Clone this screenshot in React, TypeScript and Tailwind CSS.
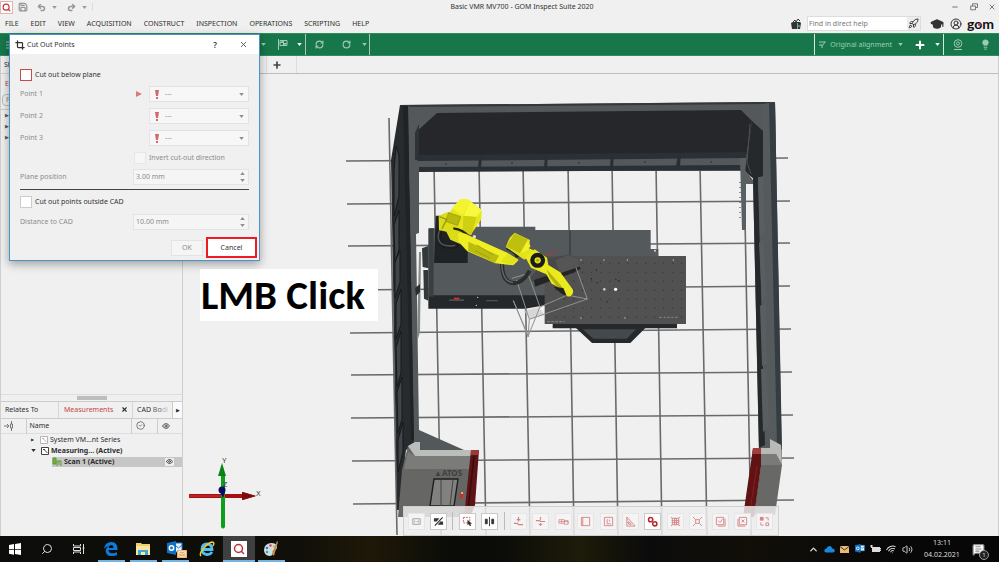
import type { ReactNode } from "react";
import {
  Check,
  ChevronUp,
  CircleCheck,
  CircleUserRound,
  Crop,
  Eye,
  GraduationCap,
  Lightbulb,
  Mail,
  Minus,
  MessageSquareText,
  Plus,
  Redo2,
  RefreshCw,
  Rocket,
  RotateCw,
  Save,
  Search,
  Undo2,
  Volume2,
  Wifi,
  X,
} from "lucide-react";

const menus = [
  "FILE",
  "EDIT",
  "VIEW",
  "ACQUISITION",
  "CONSTRUCT",
  "INSPECTION",
  "OPERATIONS",
  "SCRIPTING",
  "HELP",
];

function Caret({ className = "" }: { className?: string }) {
  return (
    <svg viewBox="0 0 6 4" className={`h-[3px] w-[5px] shrink-0 fill-current ${className}`}>
      <path d="M0 0h6L3 4z" />
    </svg>
  );
}

function TitleBar() {
  return (
    <div className="flex h-[14px] items-center text-[#989898]">
      <div className="flex w-[93px] shrink-0 items-center">
        <span className="flex size-[13px] items-center justify-center border border-[#e2b3b5] bg-white text-[#c4363b]">
          <Search className="size-[9px]" strokeWidth={3} />
        </span>
        <button aria-label="Save" className="ml-[5px]">
          <Save className="size-[10px]" strokeWidth={3} />
        </button>
        <button aria-label="Undo" className="ml-[9px]">
          <Undo2 className="size-[9px]" strokeWidth={4} />
        </button>
        <Caret className="ml-[6px]" />
        <button aria-label="Redo" className="ml-[10px]">
          <Redo2 className="size-[9px]" strokeWidth={4} />
        </button>
        <Caret className="ml-[6px]" />
        <span className="ml-auto h-2 w-px bg-[#dcdcdc]" />
      </div>
      <h1 className="flex-1 text-center text-[#333]">Basic VMR MV700 - GOM Inspect Suite 2020</h1>
      <div className="flex w-[48px] shrink-0 items-center justify-between pr-[3px] text-[#777]">
        <button aria-label="Minimize">
          <Minus className="size-2" strokeWidth={3} />
        </button>
        <button aria-label="Restore">
          <svg viewBox="0 0 8 8" className="size-2 fill-none stroke-current">
            <path d="M2.500 3V.8h5v3.700H5.500M.7 3h4.800v3.800H.7z" />
          </svg>
        </button>
        <button aria-label="Close">
          <X className="size-2" strokeWidth={3} />
        </button>
      </div>
    </div>
  );
}

function MenuBar() {
  return (
    <div className="flex h-[19px] items-center justify-between pl-[5px] pr-[3px]">
      <nav className="flex gap-3">
        {menus.map((m) => (
          <button key={m}>{m}</button>
        ))}
      </nav>
      <div className="flex items-center text-[#333]">
        <svg viewBox="0 0 10 10" className="size-[10px]">
          <path d="M0 4l2-1h7l1 1-1 6H1z" fill="#333" />
          <path d="M2 3l2-2 1 2 2-3 2 2" fill="none" stroke="#333" />
          <path d="M6.500 4v6" stroke="#999" />
          <circle cx="8" cy="7" r="1.200" fill="#2f9d4e" />
        </svg>
        <form className="ml-[6px] flex h-[15px] w-[114px] items-center border border-[#ddd] bg-white">
          <input
            aria-label="Find in direct help"
            placeholder="Find in direct help"
            className="min-w-0 flex-1 px-px outline-none placeholder:text-[#777]"
          />
          <button aria-label="Search help" className="flex h-full w-[13px] items-center justify-center bg-[#ededed]">
            <Rocket className="size-[11px]" />
          </button>
        </form>
        <GraduationCap className="ml-[9px] size-[14px] fill-[#333]" />
        <CircleUserRound className="ml-[6px] size-3" />
        <span className="relative ml-[5px] w-[29px] font-['Lato',sans-serif] text-[14px] font-bold leading-[19px] text-[#111]">
          gom
          <span className="absolute left-[11px] top-[9px] size-[3px] rounded-full bg-[#d8343a]" />
        </span>
      </div>
    </div>
  );
}

function GreenToolbar() {
  return (
    <div className="flex h-[23px] items-center justify-between border-y border-[#2f8a60] bg-[#17774a] text-[#9fcbb4]">
      <div className="flex h-full items-center">
        <svg viewBox="0 0 8 8" className="ml-[6px] size-2 stroke-current">
          <path d="M0 1h8M0 4h8M0 7h8" />
        </svg>
        <Caret className="ml-[247px]" />
        <svg viewBox="0 0 10 11" className="ml-3 h-[11px] w-[10px] fill-none stroke-current">
          <path d="M.5 0v11M2 1.500h7v5H2z" />
          <path d="M2 4l3.500-2.500v5L9 4" fill="currentColor" />
        </svg>
        <Caret className="ml-[9px] text-white" />
        <span className="ml-[3px] h-full w-px bg-[#9fcbb4]" />
        <button aria-label="Recalculate" className="ml-[9px]">
          <RefreshCw className="size-[9px]" strokeWidth={3} />
        </button>
        <button aria-label="Recalculate all" className="ml-[18px]">
          <RotateCw className="size-[9px]" strokeWidth={3} />
        </button>
        <Caret className="ml-[11px]" />
        <span className="ml-[2px] h-full w-px bg-[#9fcbb4]" />
      </div>
      <div className="flex h-full items-center">
        <span className="h-full w-px bg-[#d4e8dd]" />
        <svg viewBox="0 0 7 8" className="ml-1 h-2 w-[7px] fill-none stroke-current">
          <path d="M0 1h6.500M3 5l3-4M0 4h3v3" />
        </svg>
        <button className="ml-1 flex items-center gap-[6px]">
          Original alignment
          <Caret />
        </button>
        <button aria-label="New alignment" className="ml-[11px] text-white">
          <Plus className="size-3" strokeWidth={4} />
        </button>
        <Caret className="ml-[9px] text-white" />
        <span className="ml-[3px] h-full w-px bg-[#d4e8dd]" />
        <svg viewBox="0 0 10 11" className="ml-[9px] h-[11px] w-[10px] fill-none stroke-current">
          <circle cx="5" cy="4.500" r="3.800" />
          <circle cx="5" cy="4.500" r="1.500" />
          <path d="M1 10.500h8" />
        </svg>
        <Lightbulb className="ml-[17px] mr-2 size-[11px] fill-current" />
      </div>
    </div>
  );
}

function TreeIcon({ faded = false }: { faded?: boolean }) {
  return (
    <svg
      viewBox="0 0 8 8"
      className={`size-2 shrink-0 fill-white ${faded ? "stroke-[#b5b5b5]" : "stroke-[#444]"}`}
    >
      <path d="M.5.5h7v7h-7z" />
      <path d="M2.500 2l4 4M2 2.500h2" />
    </svg>
  );
}

function SidePanel() {
  return (
    <aside className="flex w-[183px] shrink-0 flex-col border-x border-[#cfcfcf]">
      <div className="h-[18px] border-b border-[#cfcfcf] pl-[3px] leading-[18px]">Sh</div>
      <div className="h-[20px] pl-1 leading-[20px] text-[#c4363b]">E</div>
      <div className="border-b border-[#ccc] px-px pb-[3px]">
        <div className="h-[12px] rounded-sm border border-[#bbb] pl-[3px] leading-[10px] text-[#888]">F</div>
      </div>
      <ul className="flex-1 pl-1 text-[5px] leading-[11px] text-[#555]">
        <li>▶</li>
        <li>▶</li>
        <li>▶</li>
      </ul>
      <div className="flex h-[7px] justify-center border-t border-[#ddd] pt-px">
        <span className="h-1 w-[30px] bg-[#bdbdbd]" />
      </div>
      <div role="tablist" className="flex h-[18px] shrink-0 items-stretch border-y border-[#ccc]">
        <button role="tab" className="w-[58px] border-r border-[#d5d5d5] pl-1 text-left">
          Relates To
        </button>
        <button
          role="tab"
          aria-selected="true"
          className="flex w-[74px] items-center justify-between border-r border-[#d5d5d5] pl-[5px] pr-1 text-[#cb4146]"
        >
          Measurements
          <X className="size-[7px] text-[#333]" strokeWidth={4} />
        </button>
        <button role="tab" className="flex-1 whitespace-nowrap pl-1 text-left">
          CAD <span className="text-[#666]">Bo</span>
          <span className="text-[#bbb]">di</span>
        </button>
        <button aria-label="More tabs" className="w-[10px] border-l border-[#ccc] bg-[#fafafa] text-[5px]">
          ▶
        </button>
      </div>
      <table className="mb-[69px] w-full table-fixed border-collapse">
        <colgroup>
          <col className="w-[25px]" />
          <col />
          <col className="w-[26px]" />
          <col className="w-[25px]" />
        </colgroup>
        <thead>
          <tr className="h-[15px] border-b border-[#ddd] text-left">
            <th className="border-r border-[#ccc] pl-[3px]">
              <svg viewBox="0 0 10 10" className="size-[10px] fill-none stroke-[#777]">
                <path d="M0 5h4M3 3l2 2-2 2" />
                <path d="M7.500 0v3M7.500 7v3M6.500 3h2v4h-2z" />
              </svg>
            </th>
            <th className="border-r border-[#ccc] pl-[3px] font-normal">Name</th>
            <th className="border-r border-[#ccc] pl-1">
              <CircleCheck className="size-[9px] text-[#555]" />
            </th>
            <th className="pl-1">
              <Eye className="size-2 text-[#555]" strokeWidth={3} />
            </th>
          </tr>
        </thead>
        <tbody>
          <tr className="h-[11px]">
            <td colSpan={4}>
              <div className="flex h-[11px] items-center gap-[5px] pl-[30px]">
                <span className="w-1 text-[4px]">▶</span>
                <span className="flex items-center gap-[2px]">
                  <TreeIcon faded />
                  System VM...nt Series
                </span>
              </div>
            </td>
          </tr>
          <tr className="h-[11px] font-bold">
            <td colSpan={4}>
              <div className="flex h-[11px] items-center gap-[5px] pl-[30px]">
                <Caret className="w-1" />
                <span className="flex items-center gap-[2px]">
                  <TreeIcon />
                  Measuring... (Active)
                </span>
              </div>
            </td>
          </tr>
          <tr className="h-[11px] font-bold">
            <td colSpan={4} className="pl-[51px]">
              <div className="flex h-[10px] items-center bg-[#c6c6c6]">
                <svg viewBox="0 0 10 10" className="size-[10px] fill-none stroke-[#5c9a33]">
                  <path d="M1 1h3v6H1z" fill="#6fb53a" />
                  <path d="M5 9V4h4v5M7 4v4" />
                </svg>
                <span className="ml-[2px] flex-1">Scan 1 (Active)</span>
                <span className="mr-2 flex h-2 w-[9px] items-center justify-center bg-[#eee]">
                  <Eye className="size-[7px] text-[#444]" strokeWidth={3} />
                </span>
              </div>
            </td>
          </tr>
        </tbody>
      </table>
    </aside>
  );
}

/* Floor grid of the measuring cell, lines run slightly off square */
const gridColumns = [
  [389, 118, 397, 535],
  [434, 165, 441, 535],
  [479, 165, 486, 535],
  [523, 165, 530, 535],
  [568, 165, 574, 535],
  [612, 165, 618, 535],
  [656, 165, 662, 535],
  [700, 165, 707, 535],
  [744, 165, 751, 535],
];
const gridRows = [
  [346, 161, 788, 158],
  [347, 204, 790, 201],
  [348, 246, 790, 243],
  [349, 290, 790, 286],
  [350, 333, 791, 329],
  [351, 375, 792, 372],
  [351, 418, 793, 415],
  [352, 461, 794, 458],
  [353, 504, 794, 500],
];
const tableHoles = Array.from({ length: 15 * 7 }, (_, i) => ({
  x: 467 + (i % 15) * 27,
  y: 250 + Math.floor(i / 15) * 27,
}));

function Cell() {
  return (
    <>
      <g stroke="#6a6a6a" strokeWidth="1.600">
        {[...gridColumns, ...gridRows].map(([x1, y1, x2, y2]) => (
          <line key={`${x1}-${y1}`} x1={x1} y1={y1} x2={x2} y2={y2} />
        ))}
      </g>

      {/* back wall */}
      <path d="M400 105L775 102L776 170L746 171L419 171L408 160z" fill="#54585b" />
      <path d="M400 105L775 102V104L403 107z" fill="#33383c" />
      <path d="M437 113L741 110L752 121L746 157H415V133z" fill="#25272a" />
      <path d="M415 133L419 124L419 160H415z" fill="#2e3337" />
      <path d="M417 155L746 152V158L417 161z" fill="#2a3035" />
      <path d="M419 167L741 165L742 170L419 172z" fill="#2b3035" />
      <path d="M479 156l3-1-1 13h-3zM545 156l3-1-1 13h-3zM611 155l3-1-1 13h-3zM678 154l3-1-1 13h-4z" fill="#2a2e32" />
      <g fill="#25272a">
        <circle cx="446" cy="164" r=".8" />
        <circle cx="512" cy="163" r=".8" />
        <circle cx="579" cy="163" r=".8" />
        <circle cx="645" cy="162" r=".8" />
        <circle cx="711" cy="162" r=".8" />
      </g>

      {/* left wall */}
      <path d="M400 105L408 106L413 340L415 444L406 450L399 510H397L394 340L391 160z" fill="#282b2e" />
      <path d="M408 106L415 110V160L419 161V233L416 234L419 430L464 450H414L412 340z" fill="#53585b" />
      <path d="M403 106L408 106L414 440H411z" fill="#202326" />
      <path d="M396 146l3 10v40l-5 20v-45zM394 225l5-15v40l-4 12zM395 262l5-12v32l-5 16zM396 304l5-15v35l-5 15zM396 348l5-17v42l-4 14zM397 392l5-15v42l-4 14zM398 440l5-18v30l-5 20z" fill="#3f4548" stroke="#17191b" />
      <path d="M419 252h2l-1 80-3 10z" fill="#858989" />
      <path d="M415 288l5-4v8l-4 4z" fill="#2b2e30" />

      {/* right wall */}
      <path d="M763 104L775 102L782 465L770 455H759L753 178L763 175z" fill="#555a5d" />
      <path d="M769 103L775 102L782 450L777 445z" fill="#363d42" />
      <path d="M752 121L763 131V176L754 179L745 172z" fill="#26292c" />
      <path d="M750 124l-3 38 4 12" fill="none" stroke="#4b5053" />
      <path d="M753 178L758 177L765 445L759 448z" fill="#25292c" />
      <path d="M758 177h5l2 55-5 6zM759 243l5-4 2 57-4 6zM760 306l6-4 1 62-5 2zM761 369h6l2 58-6 5z" fill="#595e61" />
      <path d="M740 158L746 158L745 170L753 180V184H746V230H742z" fill="#5a5f62" />
      <path d="M740 182v38" stroke="#303539" strokeDasharray="1 4" />

      {/* left foot */}
      <path d="M408 446L415 442H420V450H478L477 456L470 517H398L402 470z" fill="#666765" />
      <path d="M408 446L415 442H420V450H472L471 456H415z" fill="#babdba" />
      <path d="M415 456H471L470 469H404L408 452z" fill="#7b7c7a" />
      <path d="M471 450H479L475 505L470 517H464z" fill="#5d1416" />
      <path d="M471 450H479L478 455H471z" fill="#9b3a3d" />
      <path d="M474 456L468 510" stroke="#3a0b0d" strokeWidth="1.500" />
      <path d="M434 479H458L454 506H430z" fill="#81827f" stroke="#1e1e1e" strokeWidth="1.400" />
      <path d="M441 480v26M453 480l-3 26" stroke="#444" />
      <text x="434" y="476" fontSize="8" fontWeight="700" fill="#3f3f3f">
        ▲ATOS
      </text>
      <path d="M460 492h3v7h-3z" fill="#c23325" />
      <circle cx="462" cy="493" r="1" fill="#e8c8b8" />

      {/* right foot */}
      <path d="M761 448H770V439L781 445L782 465L775 515H754L761 465z" fill="#686967" />
      <path d="M761 448H770V439L781 445L782 465L776 454H761z" fill="#b7bab7" />
      <path d="M761 454H776L782 465H761z" fill="#7a7b79" />
      <path d="M753 448H761V466L754 517H743z" fill="#5f1315" />
      <path d="M753 448H761V454H752z" fill="#a13c3f" />
      <path d="M757 466L749 517" stroke="#841f22" />
    </>
  );
}

function Robot() {
  return (
    <g transform="translate(400 180) scale(.33333)">
      {/* machine bed */}
      <path d="M66 205l20-8v68l-18-4zM70 270h15v92l-13-6z" fill="#33383b" />
      <path d="M88 145h130v-5h188v10h346v57h23v24H440v122L85 350z" fill="#54595c" />
      <path d="M510 152v73" stroke="#2c3033" strokeWidth="3" />
      <path d="M85 346h350v30l-60 10H85z" fill="#25282b" />
      <path d="M85 145h16v205H85z" fill="#3a3f42" />
      <path d="M107 107h30l66 80v62H102z" fill="#202326" />
      <path d="M148 358h44v5h-44zM258 360h36v4h-36z" fill="#4c5052" />
      <path d="M162 353h16v5h-16z" fill="#e0302c" />
      <g fill="#ddd">
        <circle cx="223" cy="170" r="5" />
        <circle cx="233" cy="352" r="2" />
        <circle cx="229" cy="376" r="2" />
        <circle cx="765" cy="212" r="3" />
      </g>

      {/* perforated plate and its pedestal */}
      <path d="M458 430h373v15H458z" fill="#26292c" />
      <path d="M528 444h208l-45 45H576z" fill="#25292c" />
      <path d="M548 448h160l-28 28H580z" fill="#43494d" />
      <path d="M434 228h424v204H434z" fill="#515151" />
      <g fill="#3a3a3a">
        {tableHoles.map((h) => (
          <circle key={`${h.x}-${h.y}`} cx={h.x} cy={h.y} r="2.200" />
        ))}
      </g>
      <g fill="#c9c9c9">
        <circle cx="613" cy="328" r="4" />
        <circle cx="647" cy="328" r="5" fill="#fff" />
        <circle cx="543" cy="240" r="2" />
        <circle cx="612" cy="240" r="2" />
        <circle cx="682" cy="240" r="2" />
        <circle cx="820" cy="240" r="2" />
        <circle cx="543" cy="414" r="2" />
        <circle cx="675" cy="414" r="2" />
      </g>
      <path d="M442 425h52M778 412h60" stroke="#aaa" strokeWidth="2" strokeDasharray="7 5" />
      <path d="M572 296h4M590 308h3M588 270h3M646 298h3M620 365h3M655 302h3" stroke="#222" strokeWidth="4" />

      {/* sensor head */}
      <path d="M392 305L540 262L532 234L505 224L440 236L392 290z" fill="#484848" />
      <path d="M402 300L536 256L542 266L520 278L405 320z" fill="#242424" />
      <path d="M466 240l38-14 30 10 4 24-58 20z" fill="#555" />
      <path d="M434 226l36-12" stroke="#b93431" strokeWidth="3" />

      {/* measuring volume */}
      <path d="M372 392L415 382L434 405L390 418z" fill="#ccc" opacity=".7" />
      <path
        d="M336 295l48-14 36 100 80-35M350 300l38 118-4 52-44-108M388 418l174-61-34-94M384 470l36-90M500 345l62 12M340 362l46 108"
        fill="none"
        stroke="#929292"
        strokeWidth="3"
      />

      {/* hoses */}
      <path d="M140 135q-30 15-22 45 8 28 58 16" fill="none" stroke="#1d1d1d" strokeWidth="15" />
      <path d="M134 137q-25 15-18 42 8 24 50 17" fill="none" stroke="#505050" strokeWidth="5" />
      <path d="M306 250q0 58 35 60 28 0 48-38" fill="none" stroke="#2d2d2d" strokeWidth="12" />
      <path d="M305 252q2 53 34 56" fill="none" stroke="#656565" strokeWidth="4" />

      {/* arm */}
      <path d="M178 60q15-7 32 2l35 28-1 28-32 47-40-15-32-42z" fill="#e6e61b" />
      <path d="M178 60q15-7 32 2l-22 45-32-22z" fill="#f4f42e" />
      <path d="M210 64l-20 43 40 4 15-21z" fill="#f8f83d" />
      <path d="M230 111l-16 54-26-12 2-46z" fill="#d0d013" />
      <path d="M116 107l29-12 40 20-8 30 28 24-26 22-28-12-12-24-22-5z" fill="#dcdc1b" />
      <path d="M146 98l36 12-10 26-35-12z" fill="#b8b80e" stroke="#8e8e0c" strokeWidth="2" />
      <path d="M118 110l22 8-14 28" fill="none" stroke="#9b9b0b" strokeWidth="4" />
      <path d="M160 145q30 4 45 24" fill="none" stroke="#27270e" strokeWidth="7" />
      <path d="M174 160q20-4 36 8l112 50 34 22-16 16-54-6-84-36-26-28z" fill="#eeee22" />
      <path d="M205 185l92 42-12 22-80-36z" fill="#bcbc10" />
      <path d="M230 195l50 30M225 212l45 22" stroke="#a3a30d" strokeWidth="3" />
      <path d="M320 204q28 10 32 28" fill="none" stroke="#222" strokeWidth="10" />
      <path d="M322 222l32 16-18 16-34-8z" fill="#e2e21c" />
      <path d="M344 158l46 22-5 24 22 9-34 26-56-38 12-28z" fill="#e3e31a" />
      <path d="M344 160l-26 40 42 20 24-42z" fill="#bfbf10" />
      <path d="M385 180l-24 40 22-9 8-12z" fill="#f2f22b" />
      <path d="M376 232l28-24 37 25 4 22 36 22 38 52q3 14-8 20-14 4-22-14l-14-14-20-10-16-28-46-20z" fill="#e9e91d" />
      <path d="M440 268l42 48 16 26-28-24-22-28z" fill="#b2b20e" />
      <circle cx="413" cy="241" r="16" fill="#dede1a" stroke="#1c1c1c" strokeWidth="13" />
      <circle cx="413" cy="241" r="4" fill="#a5a50b" />
      <path d="M460 320l30 4 10 24-14-6z" fill="#222" />
    </g>
  );
}

function AxisTriad() {
  return (
    <g>
      <path d="M189 494h53l1-2 13 4-13 4-1-2h-53z" fill="#a80f12" />
      <path d="M242 492l14 4-14 4z" fill="#7d090b" />
      <path d="M221 475h4v52q-2 3-4 0z" fill="#0f9d1c" />
      <path d="M222 463l4 13h-8z" fill="#0b8216" />
      <path d="M189 496h32" stroke="#d03a3a" />
      <circle cx="222" cy="490" r="3.500" fill="#0b0b66" />
      <path d="M220 492h5l-2 6z" fill="#0b0b66" />
      <g fontSize="7" fill="#333" fontFamily="Liberation Sans, Arial, sans-serif">
        <text x="222" y="463">Y</text>
        <text x="256" y="496">X</text>
        <text x="223" y="487">Z</text>
      </g>
    </g>
  );
}

type Tool = { label: string; tone?: "dark" | "on"; icon: ReactNode };

const viewTools: Tool[][] = [
  [
    { label: "Show labels", icon: <path d="M2 3h8v6H2zM4 5v2M6 6h1M8 5v2" stroke="#999" /> },
    {
      label: "Shading",
      tone: "dark",
      icon: (
        <>
          <path d="M1 2.500h6L4 6H1zM11 9.500H5L8 6h3z" fill="currentColor" stroke="none" />
          <path d="M10.500 1.500L2 10.500" strokeWidth="1.300" />
        </>
      ),
    },
  ],
  [
    {
      label: "Select",
      tone: "dark",
      icon: (
        <>
          <path d="M1.500 1.500h7v6h-7z" strokeDasharray="2 1" stroke="#b66" />
          <path d="M6 4l5 4.500H9l1 2.500H8.500l-1-2L6 10z" fill="currentColor" stroke="none" />
        </>
      ),
    },
    { label: "Clipping", tone: "dark", icon: <path d="M6 1v10M1.500 3.500h2v5h-2zM8.500 3.500h2v5h-2z" fill="currentColor" /> },
  ],
  [
    { label: "Fit upward", icon: <path d="M1 8h4l1 1.500h5M6 1v5M4 4h4" strokeWidth="1.300" /> },
    { label: "Fit through", icon: <path d="M1 5h4l1 1h5M6 1v3M6 8v3M4 9h4" strokeWidth="1.300" /> },
    { label: "Select patch", icon: <path d="M1 4h6v4H1zM4 4v4M1 6h10v3H7V5h4v3" strokeWidth=".8" /> },
    { label: "Rectangle", icon: <path d="M1.500 1.500h9v9h-9zM3 1.500v9" /> },
    { label: "Inner rectangle", icon: <path d="M1.500 1.500h9v9h-9zM4.500 3.500v5h4M7 4v2" /> },
    { label: "Triangle", icon: <path d="M2 1v10h9zM4 6v3h3zM2 4h1M2 7h1" /> },
    {
      label: "Connected",
      tone: "on",
      icon: (
        <>
          <circle cx="4" cy="4" r="2.300" strokeWidth="1.700" />
          <circle cx="8.500" cy="8.500" r="2.300" strokeWidth="1.700" />
        </>
      ),
    },
    { label: "Mesh", icon: <path d="M1 1l2 2M11 1L9 3M1 11l2-2M11 11L9 9M2.500 2.500h7v7h-7zM5 2v8M7 2v8M2 5h8M2 7h8" /> },
    { label: "Expand", icon: <path d="M1 1l3 3M11 1L8 4M1 11l3-3M11 11L8 8M4 4h4v4H4z" /> },
    { label: "Confirm", icon: <path d="M1.500 1.500h8v8h-8zM3.500 5l2 2 3-4M11 3v8H3" /> },
    { label: "Discard", icon: <path d="M2.500 1.500h8v8h-8zM5 4l3 3M8 4L5 7M1 3v8h8" /> },
    {
      label: "Invert",
      icon: (
        <>
          <path d="M1 1h4v4H1z" fill="currentColor" stroke="none" />
          <path d="M7.500 7.500h3v3h-3zM7 2h3v3M2 7v3h3" />
        </>
      ),
    },
  ],
];

const toolTones = {
  plain: "border-[#e6e6e6] bg-[#f4f4f4] text-[#d58486]",
  dark: "border-[#c9c9c9] bg-white text-[#333]",
  on: "border-[#c9c9c9] bg-white text-[#b3272c]",
};

function ViewToolbar() {
  return (
    <div
      role="toolbar"
      aria-label="3D view"
      className="absolute bottom-0 left-1/2 flex h-[30px] w-[376px] -translate-x-1/2 items-center justify-between border border-[#cfcfcf] bg-[#ededed]/85 px-1"
    >
      {viewTools.map((group, g) => (
        <div key={group[0].label} className="contents">
          {g > 0 && <span className="h-[18px] w-px bg-[#bbb]" />}
          {group.map((t) => (
            <button
              key={t.label}
              aria-label={t.label}
              className={`flex size-[17px] items-center justify-center border ${toolTones[t.tone ?? "plain"]}`}
            >
              <svg viewBox="0 0 12 12" className="size-[11px] fill-none stroke-current">
                {t.icon}
              </svg>
            </button>
          ))}
        </div>
      ))}
    </div>
  );
}

function Viewport() {
  return (
    <main className="relative flex min-w-0 flex-1 flex-col border-r border-[#ccc]">
      <div className="flex h-[18px] shrink-0 border-b border-[#bdbdbd]">
        <span className="w-[84px] border-r border-[#ddd]" />
        <button aria-label="New tab" className="flex w-[30px] items-center border-r border-[#ddd] pl-[5px]">
          <Plus className="size-[10px] text-[#444]" strokeWidth={4} />
        </button>
      </div>
      <svg
        viewBox="183 74 815 462"
        preserveAspectRatio="xMidYMid slice"
        className="min-h-0 w-full flex-1"
        role="img"
        aria-label="Measuring cell"
      >
        <Cell />
        <Robot />
        <AxisTriad />
      </svg>
      <ViewToolbar />
    </main>
  );
}

function PointRow({ id, label, active = false }: { id: string; label: string; active?: boolean }) {
  return (
    <div className="flex h-[22px] items-center">
      <label htmlFor={id} className="flex-1">
        {label}
      </label>
      {active && (
        <svg viewBox="0 0 6 6" className="mr-[7px] size-[6px] fill-[#d77b7e]">
          <path d="M0 0l6 3-6 3z" />
        </svg>
      )}
      <div className="flex h-4 w-[100px] items-center border border-[#e3e3e3] bg-[#f7f7f7] px-1">
        <svg viewBox="0 0 4 9" className="ml-px h-[9px] w-1 fill-[#d2686b]">
          <path d="M0 0h4l-1 6H1zM1 7h2v2H1z" />
        </svg>
        <select id={id} disabled className="ml-[6px] flex-1 appearance-none">
          <option>---</option>
        </select>
        <Caret />
      </div>
    </div>
  );
}

function LengthField({ id, label, value }: { id: string; label: string; value: string }) {
  return (
    <>
      <label htmlFor={id} className="flex-1">
        {label}
      </label>
      <div className="flex h-4 w-[116px] items-center border border-[#e3e3e3] bg-[#f5f5f5] px-[2px]">
        <input id={id} disabled defaultValue={value} className="min-w-0 flex-1" />
        <span className="mr-px flex flex-col gap-1">
          <Caret className="rotate-180" />
          <Caret />
        </span>
      </div>
    </>
  );
}

function CheckBox({ tone, disabled = false }: { tone: string; disabled?: boolean }) {
  return (
    <span className="relative flex size-3">
      <input type="checkbox" disabled={disabled} className={`peer size-3 appearance-none border ${tone}`} />
      <Check className="pointer-events-none absolute inset-0 hidden size-3 peer-checked:block" />
    </span>
  );
}

function CutOutDialog() {
  return (
    <div
      role="dialog"
      aria-label="Cut Out Points"
      className="absolute left-[9px] top-[34px] w-[251px] border border-[#4a93c8] bg-[#f0f0f0] text-[#8c8c8c] shadow-[0_3px_9px_rgba(0,0,0,0.35)]"
    >
      <div className="flex h-[19px] items-center bg-white pl-[5px] pr-[11px] text-[#333]">
        <Crop className="size-[10px]" strokeWidth={3} />
        <h2 className="ml-[2px] flex-1">Cut Out Points</h2>
        <button aria-label="Help" className="text-[8px] font-semibold">
          ?
        </button>
        <button aria-label="Close dialog" className="ml-[22px]">
          <X className="size-[9px]" strokeWidth={2} />
        </button>
      </div>
      <div className="px-[10px] pb-[2px] pt-[13px]">
        <label className="flex h-4 items-center gap-[3px] text-[#333]">
          <CheckBox tone="border-[#c8484c] bg-white" />
          Cut out below plane
        </label>
        <PointRow id="point-1" label="Point 1" active />
        <PointRow id="point-2" label="Point 2" />
        <PointRow id="point-3" label="Point 3" />
        <label className="ml-[114px] flex h-[17px] items-center gap-[3px]">
          <CheckBox disabled tone="border-[#e6e6e6] bg-[#f6f6f6]" />
          Invert cut-out direction
        </label>
        <div className="flex h-[22px] items-center">
          <LengthField id="plane-position" label="Plane position" value="3.00 mm" />
        </div>
        <hr className="my-px border-[#444]" />
        <label className="flex h-[22px] items-center gap-[3px] text-[#333]">
          <CheckBox tone="border-[#ccc] bg-white" />
          Cut out points outside CAD
        </label>
        <div className="flex h-[17px] items-center">
          <LengthField id="cad-distance" label="Distance to CAD" value="10.00 mm" />
        </div>
        <div className="-mr-2 mt-[7px] flex items-center justify-end gap-[3px]">
          <button disabled className="h-4 w-8 border border-[#e3e3e3] bg-[#f5f5f5]">
            OK
          </button>
          <button className="h-[21px] w-[51px] border-2 border-[#ec1c24] bg-white text-[#333]">Cancel</button>
        </div>
      </div>
    </div>
  );
}

function OutlookIcon({ className }: { className: string }) {
  return (
    <svg viewBox="0 0 16 16" className={className}>
      <path d="M8 2h7v9H8z" fill="#e8f2fb" stroke="#1479cf" />
      <path d="M8 4l3.500 3L15 4" fill="none" stroke="#1479cf" />
      <path d="M0 2l9-2v14l-9-2z" fill="#0f70c4" />
      <circle cx="4.500" cy="7" r="2.200" fill="none" stroke="#fff" strokeWidth="1.500" />
    </svg>
  );
}

const apps: { label: string; open?: boolean; active?: boolean; icon: ReactNode }[] = [
  {
    label: "Start",
    icon: (
      <svg viewBox="0 0 12 12" className="size-3 fill-white">
        <path d="M0 2l5-1v5H0zM6 1l6-1v6H6zM0 6.700h5v5l-5-1zM6 6.700h6V12l-6-1z" />
      </svg>
    ),
  },
  { label: "Search", icon: <Search className="size-3 -scale-x-100 text-[#ddd]" /> },
  {
    label: "Task view",
    icon: (
      <svg viewBox="0 0 12 12" className="size-3 fill-none stroke-[#ddd]">
        <path d="M.5 1v2h7V1M.5 11V9h7v2M.5 4.500h7v3h-7zM10.500 1v10M9.500 5h2" />
      </svg>
    ),
  },
  {
    label: "Edge",
    open: true,
    icon: (
      <svg viewBox="0 0 14 14" className="size-[14px]">
        <path d="M0 7Q1 0 7.500 0 14 .5 13.500 8H4.500q.5 5 8.500 2.300V13Q3 16.500 1.600 9 2 5 5.500 3.500 2 4 0 7zm4.700-1h4.800Q9.500 3 7.200 3 5 3.200 4.700 6z" fill="#0f7bdc" />
      </svg>
    ),
  },
  {
    label: "Explorer",
    open: true,
    icon: (
      <svg viewBox="0 0 16 14" className="h-[14px] w-4">
        <path d="M1 1h5l1 1h8v11H1z" fill="#f2cf6d" />
        <path d="M1 4h14v9H1z" fill="#fbe69d" />
        <path d="M3 13V8h10v5h-3v-3H6v3z" fill="#3fa7dc" />
      </svg>
    ),
  },
  {
    label: "Outlook",
    open: true,
    icon: (
      <span className="relative">
        <OutlookIcon className="size-4" />
        <span className="absolute -bottom-px -right-1 bg-[#e9b26b] text-white">
          <Mail className="h-2 w-[10px]" strokeWidth={2} />
        </span>
      </span>
    ),
  },
  {
    label: "Internet Explorer",
    icon: (
      <svg viewBox="0 0 16 16" className="size-4 fill-none">
        <path d="M13 11q-2 3-5 2.500Q3 13 3 8t5-5q5 0 5 5.500H4" stroke="#4ec0ef" strokeWidth="2.800" />
        <path d="M2 15Q0 13 4 8q5-6 9-7 3 0 1 4" stroke="#f0c93f" strokeWidth="1.500" />
      </svg>
    ),
  },
  {
    label: "GOM Inspect",
    open: true,
    active: true,
    icon: (
      <span className="flex size-4 items-center justify-center bg-white">
        <Search className="size-3 text-[#b9343a]" strokeWidth={3} />
      </span>
    ),
  },
  {
    label: "Paint",
    open: true,
    icon: (
      <svg viewBox="0 0 16 16" className="size-4">
        <path d="M1 9q0-6 7-7 6 0 6 4 0 3-3 3-2 1-1 3 0 3-4 3-5-1-5-6z" fill="#c9dfec" />
        <circle cx="4" cy="7" r="1.300" fill="#4079c8" />
        <circle cx="7.500" cy="4.500" r="1.300" fill="#d64f3e" />
        <circle cx="4" cy="11" r="1.300" fill="#58a94d" />
        <circle cx="11" cy="5.500" r="1.200" fill="#e3b13f" />
        <path d="M14 0l1 1-4 14-2-2z" fill="#c98948" />
      </svg>
    ),
  },
];

function Taskbar() {
  return (
    <footer className="flex h-[26px] shrink-0 items-stretch justify-between bg-[linear-gradient(90deg,#0c0d0b_0%,#100f09_30%,#1f1808_37%,#0b0c08_45%,#0b0c08_50%,#1d1b09_58%,#0b0b0b_65%,#120f09_75%,#070707_90%)]">
      <nav className="-ml-px flex">
        {apps.map((a) => (
          <button
            key={a.label}
            aria-label={a.label}
            className={`relative flex w-8 items-center justify-center ${a.active ? "bg-[#3f3f3f]" : ""}`}
          >
            {a.icon}
            {a.open && <span className={`absolute bottom-0 h-[2px] bg-[#77b3e0] ${a.active ? "w-8" : "w-[27px]"}`} />}
          </button>
        ))}
      </nav>
      <div className="flex items-center pr-[14px] text-[#ddd]">
        <ChevronUp className="size-[11px]" strokeWidth={3} />
        <svg viewBox="0 0 11 8" className="ml-[5px] h-2 w-[11px]">
          <path d="M2 7.500Q0 7 .3 5 1 3.500 2.500 3.500 3.500.5 6 1q2 .5 2.300 2.500 2.500 0 2.500 2.200-.2 1.800-2 1.800z" fill="#1689dd" />
        </svg>
        <svg viewBox="0 0 9 7" className="ml-[5px] h-[7px] w-[9px]">
          <path d="M0 0h9v7H0z" fill="#e9b97a" />
          <path d="M0 .5l4.500 3.500L9 .5" fill="none" stroke="#4a3718" />
        </svg>
        <OutlookIcon className="ml-[6px] size-[10px]" />
        <svg viewBox="0 0 11 8" className="ml-[5px] h-2 w-[11px]">
          <path d="M2 2h8v5H2z" fill="#ddd" />
          <path d="M0 1h3M1.500 0v3M10 3.500h1v2h-1" stroke="#ddd" />
        </svg>
        <Wifi className="ml-[5px] size-[11px] rotate-[-20deg]" />
        <Volume2 className="ml-[5px] size-[11px]" />
        <time className="ml-[10px] w-[38px] text-center leading-[12px]">
          13:11
          <br />
          04.02.2021
        </time>
        <span className="relative ml-[11px]">
          <MessageSquareText className="size-[13px] fill-white text-[#888]" />
          <span className="absolute -bottom-1 -right-1 flex size-[10px] items-center justify-center rounded-full border border-[#999] bg-[#222] text-[6px]">
            1
          </span>
        </span>
      </div>
    </footer>
  );
}

export default function App() {
  return (
    <div className="relative flex h-screen flex-col overflow-hidden bg-[#f0f0f0] font-['Noto_Sans','Open_Sans',sans-serif] text-[7px] leading-[10px] text-[#2e2e2e]">
      <TitleBar />
      <MenuBar />
      <GreenToolbar />
      <div className="flex min-h-0 flex-1">
        <SidePanel />
        <Viewport />
      </div>
      <Taskbar />
      <CutOutDialog />
      <p className="absolute left-[200px] top-[269px] flex h-[52px] w-[178px] items-center justify-center bg-white pr-3 font-['Carlito','Lato',sans-serif] text-[41px] font-bold leading-none whitespace-nowrap text-black">
        LMB Click
      </p>
    </div>
  );
}
